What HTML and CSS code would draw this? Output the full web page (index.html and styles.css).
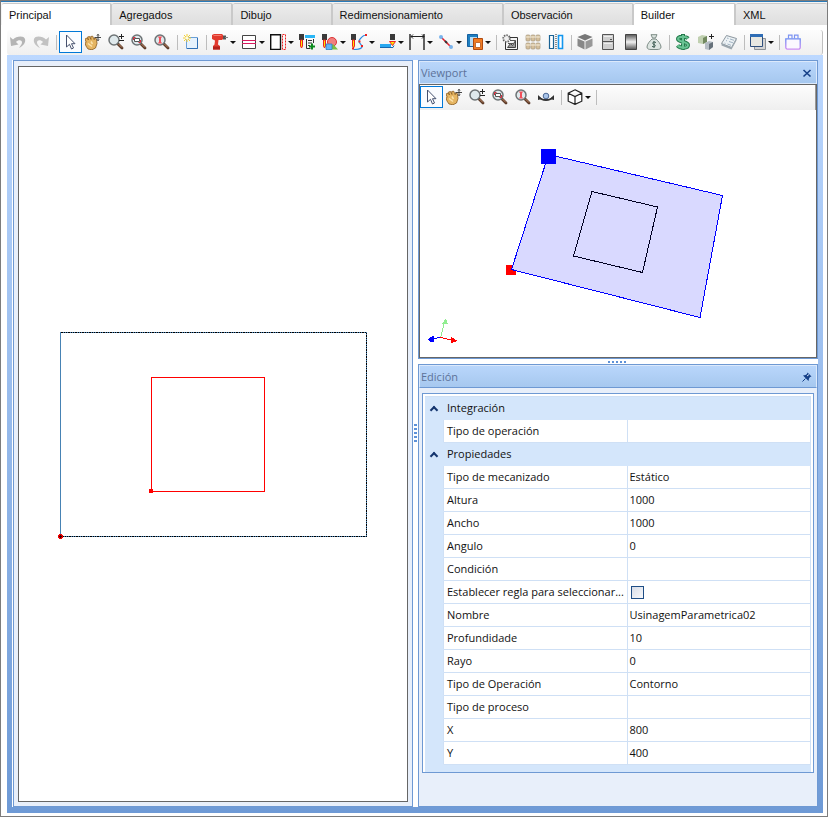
FILE: index.html
```html
<!DOCTYPE html>
<html lang="es">
<head>
  <meta charset="UTF-8">
  <meta name="viewport" content="width=device-width, initial-scale=1.0">
  <title>Builder</title>
  <link rel="stylesheet" href="styles.css">
</head>
<body>

<svg class="symbols" aria-hidden="true">
  <symbol id="i-pointer" viewBox="0 0 16 16"><path d="M4.500 1v12l3-2.700 2 4.700 2-1-2-4.300h3.500z" fill="#fff" stroke="#44506e"/></symbol>
  <symbol id="i-hand" viewBox="0 0 16 16">
    <path d="M0 5l2-1 1.500 2L2.500 3l2-.5L6 5.500 5.700 2.500l2-.3 1.500 3.500.3-1.700 1.800.5.7 5-1.500 4.500-3.500 1.800-4-.8L1 12 0 9l1.200-.7z" fill="#e5b562" stroke="#8a5a1d" stroke-width=".8"/>
    <path d="M3 9.500l4 3M6 7.500l1.500 2.500" stroke="#fbe3ae" stroke-width="1.500" fill="none"/>
    <path d="M13 0v7M9.500 3.500h7M12 1.500l1-1 1 1M12 5.500l1 1 1-1" stroke="#333" fill="none" stroke-width=".9"/>
  </symbol>
  <symbol id="i-lens" viewBox="0 0 16 16">
    <path d="M9.500 9.500l4.500 4.500" stroke="#5b3a28" stroke-width="2.800" stroke-linecap="round"/>
    <path d="M10.500 10l3.500 3.500" stroke="#c08a68" stroke-width="1"/>
    <circle cx="6" cy="6" r="5" fill="#dfe9ec" stroke="#6d7375" stroke-width="1.500"/>
  </symbol>
  <symbol id="i-zoom" viewBox="0 0 16 16"><use href="#i-lens"/><path d="M13.500 0v5M11 2.500h5M11 6.500h5" stroke="#222" fill="none"/></symbol>
  <symbol id="i-zoomrect" viewBox="0 0 16 16"><use href="#i-lens"/><path d="M3.500 4.500h5v3h-5z" fill="#fff" stroke="#555"/><path d="M2.500 6v-2.500h2M9.500 6v2.500h-2" fill="none" stroke="#d92a3a"/></symbol>
  <symbol id="i-zoomone" viewBox="0 0 16 16"><use href="#i-lens"/><path d="M6 3v6" stroke="#f0505a" stroke-width="2"/><path d="M4 3h4M4 9h4" stroke="#f0505a"/></symbol>
  <symbol id="i-bit" viewBox="0 0 16 16"><path d="M1 0h5v6H1z" fill="#3a3a3a"/><path d="M2.500 6h2v6l-1 2-1-2z" fill="#ffe600" stroke="#e22"/></symbol>
</svg>

<div class="window">
  <div class="tabs" role="tablist">
    <button class="tab active" role="tab">Principal</button>
    <button class="tab" role="tab">Agregados</button>
    <button class="tab" role="tab">Dibujo</button>
    <button class="tab" role="tab">Redimensionamiento</button>
    <button class="tab" role="tab">Observación</button>
    <button class="tab active" role="tab">Builder</button>
    <button class="tab last" role="tab">XML</button>
  </div>

  <div class="toolbar main-toolbar" role="toolbar" aria-label="Builder">
    <button class="tool" aria-label="Deshacer"><svg viewBox="0 0 16 16"><path d="M0 3l3 2.500C6 2 14 1 15 5c1 4-2 7-6 9 2-3 4-5 2.500-7C10.500 5.500 7.500 6 6 8l2.500 2.500L1 12z" fill="#b4b4b4"/></svg></button>
    <button class="tool" aria-label="Rehacer"><svg viewBox="0 0 16 16"><path d="M16 3l-3 2.500C10 2 2 1 1 5c-1 4 2 7 6 9-2-3-4-5-2.500-7C5.500 5.500 8.500 6 10 8l-2.500 2.500L15 12z" fill="#c2c2c2"/></svg></button>
    <span class="sep"></span>
    <button class="tool selected" aria-label="Seleccionar"><svg><use href="#i-pointer"/></svg></button>
    <button class="tool" aria-label="Mover"><svg><use href="#i-hand"/></svg></button>
    <button class="tool" aria-label="Zoom"><svg><use href="#i-zoom"/></svg></button>
    <button class="tool" aria-label="Zoom ventana"><svg><use href="#i-zoomrect"/></svg></button>
    <button class="tool" aria-label="Zoom 1:1"><svg><use href="#i-zoomone"/></svg></button>
    <span class="sep"></span>
    <button class="tool" aria-label="Nuevo"><svg viewBox="0 0 16 16"><path d="M3.500 3.500h11v11h-11z" fill="#e6f2fd" stroke="#6aa0d8"/><path d="M14.500 4v10.500H4" fill="none" stroke="#2f6fb5"/><path d="M4 0v8M0 4h8M1 1l6 6M7 1L1 7" stroke="#f2cf35"/><circle cx="4" cy="4" r="1.500" fill="#fffbe0"/></svg></button>
    <span class="sep"></span>
    <button class="tool drop" aria-label="Taladro"><svg viewBox="0 0 16 16"><path d="M0 1l2-1h8l1 1v4l-1 1H6.500L6 10.500l2 1.500v3.500H1V12l1.500-1.500L3 6.500 0 5z" fill="#e23a2e"/><path d="M1 12.500h7v3H1z" fill="#b3201a"/><path d="M1.500 1.500h8" stroke="#f47a6c"/><path d="M11 3.500h3" stroke="#555" stroke-width="4"/><path d="M13 3.500h3" stroke="#888"/></svg></button>
    <button class="tool drop" aria-label="Ranuras"><svg viewBox="0 0 16 16"><path d="M1.500 1.500h13v13h-13z" fill="#fff" stroke="#444"/><path d="M1 6.500h14M1 9.500h14" stroke="#d81b60" stroke-width="1.200"/></svg></button>
    <button class="tool drop" aria-label="Borde"><svg viewBox="0 0 16 16"><path d="M.7.700h9.800v14.800H.7z" fill="#fff" stroke="#111" stroke-width="1.400"/><path d="M12.500.500h3v15h-3z" fill="none" stroke="#e22" stroke-dasharray="2 1"/></svg></button>
    <button class="tool" aria-label="Lista de herramientas"><svg viewBox="0 0 16 16"><use href="#i-bit" x="-1"/><path d="M6 1h10v3H6z" fill="#29b6f6"/><path d="M7.500 5v9.500h4M14.500 5v4M9 6.500h4M9 9h4M9 11.500h2" stroke="#333" fill="none"/><path d="M13 9.500v6M10 12.500h6" stroke="#0b8a1d" stroke-width="2"/></svg></button>
    <button class="tool drop" aria-label="Formas"><svg viewBox="0 0 16 16"><use href="#i-bit" x="-1"/><circle cx="10" cy="8" r="4.500" fill="#f08080" stroke="#d33"/><path d="M7 15.500l4-5.500 5 5.500z" fill="#7bc043"/><path d="M4 10h6v5.500H4z" fill="#64b5f6" stroke="#1c79c0" stroke-width=".7"/></svg></button>
    <button class="tool drop" aria-label="Curva"><svg viewBox="0 0 16 16"><use href="#i-bit" x="-1"/><path d="M2.500 15.500c5 0 10-1 8-4s-4-4-1-7 3-3 6-3.500" fill="none" stroke="#2d8ae0" stroke-width="1.200"/><path d="M1 14.500h2M10 12h2M7.500 7.500h2M14 1h2" stroke="#e22" stroke-width="2"/></svg></button>
    <button class="tool drop" aria-label="Fresado"><svg viewBox="0 0 16 16"><path d="M10 0h5v6h-5z" fill="#3a3a3a"/><path d="M9.500 7.500h6l-3 4z" fill="#ffe600" stroke="#e22"/><path d="M0 11.500h11" stroke="#29a8f0" stroke-width="3"/><path d="M0 13.500h13l1-2" stroke="#1668b0" fill="none"/></svg></button>
    <button class="tool drop" aria-label="Cota"><svg viewBox="0 0 16 16"><path d="M1 0v16M15 0v16" stroke="#222" stroke-width="1.400"/><path d="M2 2.500h13M4 .5l-2 2 2 2M13 .5l2 2-2 2" stroke="#222" fill="none"/></svg></button>
    <button class="tool drop" aria-label="Línea"><svg viewBox="0 0 16 16"><path d="M3 3l10 10" stroke="#e0202c" stroke-width="1.500"/><circle cx="3" cy="3" r="2" fill="#7ab4ec"/><circle cx="13" cy="13" r="2" fill="#7ab4ec"/><path d="M7 7l2 2" stroke="#333" stroke-width="2"/></svg></button>
    <button class="tool drop" aria-label="Ordenar"><svg viewBox="0 0 16 16"><path d="M.5.500h10v12H.5z" fill="#1e7fc0" stroke="#1560a0"/><path d="M3 3h7v9H3z" fill="#b8dcf4"/><path d="M6.500 4.500h9v11h-9z" fill="#f07c22" stroke="#b14a10"/><path d="M8.500 8.500h5v5h-5z" fill="#fff" stroke="#c46a30"/></svg></button>
    <span class="sep"></span>
    <button class="tool" aria-label="Configurar imagen"><svg viewBox="0 0 16 16"><path d="M3.500 3.500h12v12h-12z" fill="#f4f4f4" stroke="#333"/><path d="M5.500 13.500l3-4 2 2 3-5v7z" fill="#999" stroke="#444"/><path d="M8 6.500h5M6 9.500h5" stroke="#555"/><circle cx="4.500" cy="4.500" r="3.300" fill="#f0f0f0" stroke="#666" stroke-width="1.800" stroke-dasharray="1.500 1"/></svg></button>
    <button class="tool" aria-label="Piezas"><svg viewBox="0 0 16 16"><g fill="#d4bf9c" stroke="#a8997f" stroke-width=".7"><rect x="1" y="1" width="4" height="6" rx="1"/><rect x="6" y="1" width="4" height="6" rx="1"/><rect x="11" y="1" width="4" height="6" rx="1"/><rect x="1" y="9" width="4" height="6" rx="1"/><rect x="6" y="9" width="4" height="6" rx="1"/><rect x="11" y="9" width="4" height="6" rx="1"/></g><path d="M1 3h14M1 11h14" stroke="#f7eeda"/></svg></button>
    <button class="tool" aria-label="Espejo"><svg viewBox="0 0 16 16"><path d="M1.500 1.500h4v13h-4z" fill="#fff" stroke="#1a6294" stroke-width="1.200"/><path d="M10.500 1.500h4v13h-4z" fill="#fff" stroke="#1296ee" stroke-width="1.600"/><path d="M8 0v16" stroke="#222" stroke-dasharray="1 1"/></svg></button>
    <span class="sep"></span>
    <button class="tool" aria-label="Módulo"><svg viewBox="0 0 16 16"><path d="M8 0l7.500 3L8 6.500.5 3z" fill="#777"/><path d="M.5 4.500L7.500 7.500v8L.5 12z" fill="#888"/><path d="M15.500 4.500L8.500 7.500v8l7-3.500z" fill="#989898"/></svg></button>
    <button class="tool" aria-label="Gabinete"><svg viewBox="0 0 16 16"><path d="M2.500.500h11v15h-11z" fill="#cfcfcf" stroke="#555"/><path d="M3 7.500h10M10 5.500h2" stroke="#555"/><path d="M4 2.500h8M4 9.500h8" stroke="#eee"/></svg></button>
    <button class="tool" aria-label="Material"><svg viewBox="0 0 16 16"><defs><linearGradient id="g-mat" x2="0" y2="1"><stop offset="0" stop-color="#555"/><stop offset=".5" stop-color="#f2f2f2"/><stop offset="1" stop-color="#555"/></linearGradient></defs><path d="M2.500.500h11v15h-11z" fill="url(#g-mat)" stroke="#444"/></svg></button>
    <button class="tool" aria-label="Costo"><svg viewBox="0 0 16 16"><path d="M5 .7h6L9.500 4h-3zM6 5h4c2 2 5 5 5 8 0 2-2 2.500-4 2.500H5c-2 0-4-.5-4-2.500 0-3 3-6 5-8z" fill="#dde5e1" stroke="#7d8c86"/><path d="M10 8.500c-4-1.500-4 1.500-2 2s2 3-2 2M8 7v7" fill="none" stroke="#3d5a50"/></svg></button>
    <span class="sep"></span>
    <button class="tool" aria-label="Precio"><svg viewBox="0 0 16 16"><path d="M13 4.500C11 2 3 2 3 5s10 2.500 10 6-8 3.500-10.500.5M8 0v16" fill="none" stroke="#237a4b" stroke-width="4"/><path d="M13 4.500C11 2 3 2 3 5s10 2.500 10 6-8 3.500-10.500.5M8 1v14" fill="none" stroke="#69c393" stroke-width="2"/></svg></button>
    <button class="tool" aria-label="Reemplazar"><svg viewBox="0 0 16 16"><path d="M0 3l4-2 5 1v6l-4 2-5-1z" fill="#c0d0b0"/><path d="M5 4l4-2v6l-4 2z" fill="#72895f"/><path d="M7 9l4-2 4 1v5l-4 3-4-1z" fill="#b5bdc4"/><path d="M11 10l4-2v5l-4 3z" fill="#66717a"/><path d="M11 2.500h5M13.500 0v5" stroke="#222"/></svg></button>
    <button class="tool" aria-label="Notas"><svg viewBox="0 0 16 16"><path d="M5.500 1.500l10 3-5 9-10-4z" fill="#edf2f5" stroke="#8b969e"/><path d="M.5 9.500l10 4 5-9v2l-5 9-10-4z" fill="#9ba6ae"/><path d="M6 4l1.500.5M9 5l4 1.300M5 6.500l1 .4M8 7.500l4 1.300M3.500 9l1 .4M6.500 10l3.500 1.300" stroke="#8da2b5" stroke-width=".8"/></svg></button>
    <span class="sep"></span>
    <button class="tool drop" aria-label="Ventanas"><svg viewBox="0 0 16 16"><path d="M4.500 4.500h11v11h-11z" fill="#d4d4d4" stroke="#8d9297"/><path d="M.5.500h12v12H.5z" fill="#e8e8e2" stroke="#2f4f7c"/><path d="M0 1.500h13" stroke="#2f6db5" stroke-width="3"/></svg></button>
    <span class="sep"></span>
    <button class="tool" aria-label="Complementos"><svg viewBox="0 0 16 16"><defs><linearGradient id="g-plug" x2="0" y2="1"><stop offset="0" stop-color="#6b8cf2"/><stop offset="1" stop-color="#cf8ef4"/></linearGradient></defs><path d="M.8 4.800h14.400V14l-1 1.200H2L.8 14z" fill="#fbf8ff" stroke="url(#g-plug)" stroke-width="1.300"/><path d="M3.500 4.500V1.200h3.500v3.300M9.500 4.500V1.200h3.500v3.300" fill="none" stroke="#7d93f2" stroke-width="1.200"/></svg></button>
  </div>

  <main class="dock">
    <section class="panel design" aria-label="Dibujo 2D">
      <div class="canvas">
        <svg width="314" height="210" viewBox="56 329 314 210" shape-rendering="crispEdges">
          <path d="M60.500 332.500h306v204h-306z" fill="none" stroke="#4682b4"/>
          <path d="M61 332.500h305.500v204H61" fill="none" stroke="#000" stroke-dasharray="2 1 1 1 1 1"/>
          <path d="M151.500 377.500h113v114h-113z" fill="none" stroke="#f00"/>
          <path d="M149 489h4v4h-4z" fill="#f00"/>
          <path d="M59 534h3v1h1v3h-1v1h-3v-1h-1v-3h1z" fill="#e00"/>
          <path d="M60 535h1v3h-1zM59 536h3v1h-3z" fill="#400"/>
        </svg>
      </div>
    </section>

    <div class="splitter"><span class="grip"></span></div>

    <div class="side">
      <section class="panel viewport">
        <header class="panel-head">
          <h2>Viewport</h2>
          <button class="head-btn" aria-label="Cerrar"><svg viewBox="0 0 10 10"><path d="M1.500 2l7 6.500M8.500 2l-7 6.500" stroke="#153f87" stroke-width="1.600"/></svg></button>
        </header>
        <div class="view">
          <div class="toolbar view-toolbar" role="toolbar" aria-label="Viewport">
            <button class="tool selected" aria-label="Seleccionar"><svg><use href="#i-pointer"/></svg></button>
            <button class="tool" aria-label="Mover"><svg><use href="#i-hand"/></svg></button>
            <button class="tool" aria-label="Zoom"><svg><use href="#i-zoom"/></svg></button>
            <button class="tool" aria-label="Zoom ventana"><svg><use href="#i-zoomrect"/></svg></button>
            <button class="tool" aria-label="Zoom 1:1"><svg><use href="#i-zoomone"/></svg></button>
            <button class="tool" aria-label="Orbitar"><svg viewBox="0 0 16 16"><path d="M1 8c3 4 11 4 14 0" fill="none" stroke="#333" stroke-width="1.800"/><path d="M0 6v5l4-1zM16 6v5l-4-1z" fill="#333"/><circle cx="8" cy="7" r="2.800" fill="#a9c4e8" stroke="#4a6794"/></svg></button>
            <span class="sep"></span>
            <button class="tool drop" aria-label="Vista"><svg viewBox="0 0 16 16"><path d="M8 .8l6.800 3.400v8L8 15.400 1.200 12.200v-8zM1.200 4.200L8 7.500l6.800-3.300M8 7.500v8" fill="#fff" stroke="#222" stroke-width="1.200"/></svg></button>
            <span class="sep"></span>
          </div>
          <svg class="scene" viewBox="420 110 396 247" preserveAspectRatio="xMinYMin meet">
            <g shape-rendering="crispEdges">
              <path d="M506 265h10v10h-10z" fill="#f00"/>
              <path d="M548.500 154.500L722.500 195.500 700 317.500 511.500 269.500z" fill="#d9d9ff" stroke="#00f"/>
              <path d="M592 191.500l65.500 15.500-15 65.500-69-16.500z" fill="none" stroke="#002"/>
              <path d="M541 149h15v15h-15z" fill="#00f"/>
              <path d="M440.500 337.500l4-15" stroke="#90ee90"/>
              <path d="M446 318l2 6h-6z" fill="#90ee90"/>
              <path d="M440.500 337.500l13 3" stroke="#f00"/>
              <path d="M451 337l7 4-7 2z" fill="#f00"/>
              <path d="M440 337.500l-8 1.500" stroke="#00f"/>
              <path d="M430 337l4-1v6h-4l-2-3z" fill="#00f"/>
            </g>
          </svg>
        </div>
      </section>

      <div class="splitter horizontal"><span class="grip"></span></div>

      <section class="panel edit">
        <header class="panel-head">
          <h2>Edición</h2>
          <button class="head-btn" aria-label="Fijar"><svg viewBox="0 0 10 10"><path d="M5.500.5l4 4-1.500.5-1 1.500L6.500 9 1 3.500l2.500-.5L5 2z" fill="#153f87"/><path d="M3.500 6.500L.5 9.500" stroke="#153f87"/><path d="M5 4l2-1.500" stroke="#d6e6fa"/></svg></button>
        </header>
        <div class="edit-body">
          <div class="grid-frame">
            <table class="props">
              <colgroup><col class="c-gutter"><col><col></colgroup>
              <tbody>
                <tr class="category"><td><button class="fold" aria-label="Contraer Integración"></button></td><th colspan="2">Integración</th></tr>
                <tr><td></td><th scope="row">Tipo de operación</th><td></td></tr>
              </tbody>
              <tbody>
                <tr class="category"><td><button class="fold" aria-label="Contraer Propiedades"></button></td><th colspan="2">Propiedades</th></tr>
                <tr><td></td><th scope="row">Tipo de mecanizado</th><td>Estático</td></tr>
                <tr><td></td><th scope="row">Altura</th><td>1000</td></tr>
                <tr><td></td><th scope="row">Ancho</th><td>1000</td></tr>
                <tr><td></td><th scope="row">Angulo</th><td>0</td></tr>
                <tr><td></td><th scope="row">Condición</th><td></td></tr>
                <tr><td></td><th scope="row"><label for="regla">Establecer regla para seleccionar...</label></th><td><input type="checkbox" id="regla"></td></tr>
                <tr><td></td><th scope="row">Nombre</th><td>UsinagemParametrica02</td></tr>
                <tr><td></td><th scope="row">Profundidade</th><td>10</td></tr>
                <tr><td></td><th scope="row">Rayo</th><td>0</td></tr>
                <tr><td></td><th scope="row">Tipo de Operación</th><td>Contorno</td></tr>
                <tr><td></td><th scope="row">Tipo de proceso</th><td></td></tr>
                <tr><td></td><th scope="row">X</th><td>800</td></tr>
                <tr><td></td><th scope="row">Y</th><td>400</td></tr>
              </tbody>
            </table>
            <div class="props-end"></div>
          </div>
        </div>
      </section>
    </div>
  </main>
</div>

</body>
</html>
```

FILE: styles.css
```css
*,
*::before,
*::after {
  box-sizing: border-box;
}
body {
  margin: 0;
  background-color: white;
  font-family: "Open Sans", "Noto Sans", sans-serif;
  font-size: 11px;
  color: #111;
}
button {
  margin: 0;
  padding: 0;
  border: none;
  background: none;
  font: inherit;
  color: inherit;
}
.symbols {
  display: none;
}
.window {
  display: flex;
  flex-direction: column;
  min-height: 100vh;
  border: 1px solid #7c7c7c;
}

/* tabs */
.tabs {
  display: flex;
  height: 24px;
  padding: 1px 0 0 1px;
  border-top: 1px solid #2a7ab8;
  background-color: #f4f4f4;
}
.tab {
  padding: 0 59px 0 7px;
  border: 1px solid #c9c9c9;
  border-width: 1px 1px 0 0;
  border-right: 2px solid #c9c9c9;
  border-radius: 2px 2px 0 0;
  background: linear-gradient(#ececec, #dedede);
  font-family: "Liberation Sans", sans-serif;
  font-size: 11px;
  text-align: left;
}
.tab.active {
  background: white;
}
.tab.last {
  flex: 1;
  border-right: none;
}

/* toolbars */
.toolbar {
  display: flex;
  align-items: center;
  background: linear-gradient(#fdfdfd, #efefef);
}
.main-toolbar {
  height: 25px;
  margin: 5px 4px 0 6px;
  padding-bottom: 1px;
  border-right: 1px solid #c0c0c0;
  border-radius: 3px;
}
.view-toolbar {
  height: 25px;
  padding-bottom: 1px;
  border-right: 1px solid #999;
}
.tool {
  display: flex;
  align-items: center;
  flex: none;
  width: 23px;
  height: 22px;
  padding-left: 3px;
}
.tool svg {
  display: block;
  width: 16px;
  height: 16px;
}
.tool.selected {
  padding-left: 2px;
  border: 1px solid #0078d7;
  background-color: #fafcff;
}
.drop {
  width: 29px;
}
.drop::after {
  content: "";
  margin-left: 2px;
  border: 3px solid transparent;
  border-top-color: #111;
  border-bottom: none;
}
.sep {
  flex: none;
  width: 6px;
  height: 15px;
  background: linear-gradient(#bdbdbd, #bdbdbd) 3px 0 / 1px 100% no-repeat;
}

/* dock area */
.dock {
  flex: 1;
  display: grid;
  grid-template-columns: 1fr 5px 1fr;
  margin: 0 4px 3px 6px;
  padding: 5px 5px 6px 6px;
  background: linear-gradient(#bcd8ff, #6e9ad6);
}
.panel {
  border: 1px solid #6e99d3;
  background-color: #e8effa;
}
.design {
  display: flex;
  padding: 5px 4px 4px;
  box-shadow: -1px 0 white;
}
.canvas {
  flex: 1;
  display: flex;
  align-items: center;
  justify-content: center;
  border: 1px solid #666;
  background-color: white;
}
.canvas svg {
  display: block;
}
.splitter {
  display: flex;
  align-items: center;
  justify-content: center;
  background-color: white;
}
.grip {
  width: 3px;
  height: 20px;
  background: repeating-linear-gradient(#5d91d8 0 2px, white 2px 4px);
}
.splitter.horizontal {
  height: 5px;
}
.horizontal .grip {
  width: 20px;
  height: 2px;
  background: repeating-linear-gradient(90deg, #5d91d8 0 2px, white 2px 4px);
}
.side {
  display: flex;
  flex-direction: column;
  min-width: 0;
}
.panel-head {
  display: flex;
  align-items: center;
  justify-content: space-between;
  height: 23px;
  padding: 0 4px 0 1px;
  border: 1px solid #dce9fb;
  background: linear-gradient(#b9d6fb, #a6c8ef);
}
.panel-head h2 {
  margin: 0;
  font-size: 11px;
  font-weight: normal;
  color: #5c7299;
}
.head-btn svg {
  display: block;
  width: 10px;
  height: 10px;
}
.view {
  border: 1px solid #666;
  background-color: white;
}
.scene {
  display: block;
  width: 100%;
}
.edit {
  flex: 1;
  display: flex;
  flex-direction: column;
}
.edit .panel-head {
  border-bottom-color: #6e99d3;
}
.edit-body {
  flex: 1;
  padding: 5px 3px;
}

/* property grid */
.grid-frame {
  padding: 2px 2px 0;
  border: 1px solid #6e99d3;
  background-color: white;
}
.props {
  width: 100%;
  border-collapse: separate;
  border-spacing: 0;
  table-layout: fixed;
  border-top: 1px solid #cfe0f5;
}
.c-gutter {
  width: 19px;
}
.props td,
.props th {
  height: 23px;
  padding: 0 0 0 2px;
  border-right: 1px solid #cfe0f5;
  border-bottom: 1px solid #cfe0f5;
  font-weight: normal;
  line-height: 16px;
  text-align: left;
  white-space: nowrap;
}
.props th {
  padding-left: 3px;
}
.props td:first-child {
  padding: 0;
  border-bottom-color: #d4e6fb;
  background-color: #d4e6fb;
}
.props .category th {
  border-bottom-color: #d4e6fb;
  background-color: #d4e6fb;
}
.props .category td:first-child {
  border-right-color: #d4e6fb;
}
.fold {
  display: flex;
  align-items: center;
  justify-content: center;
  width: 18px;
  height: 20px;
  padding-top: 3px;
}
.fold::before {
  content: "";
  width: 6px;
  height: 6px;
  border: solid #14356e;
  border-width: 2px 0 0 2px;
  transform: rotate(45deg);
}
.props input {
  appearance: none;
  display: block;
  width: 13px;
  height: 13px;
  margin: 0 0 0 1px;
  border: 1px solid #1f4e86;
  background: linear-gradient(135deg, #d8dde8, #f8f9fb);
}
.props-end {
  height: 7px;
  background-color: #d4e6fb;
}
```
